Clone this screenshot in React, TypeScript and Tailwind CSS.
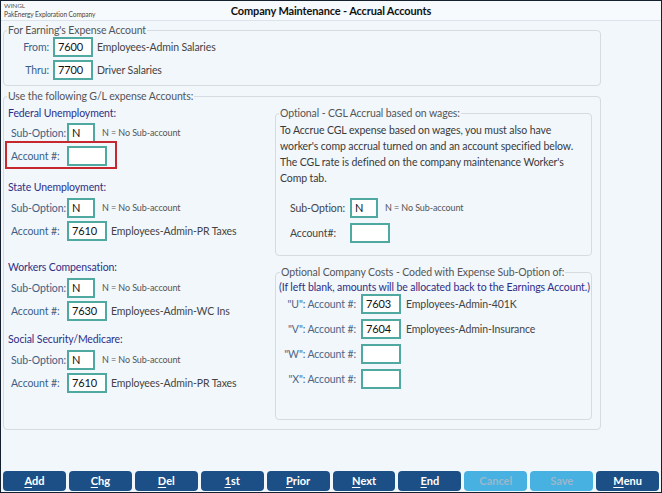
import React from "react";

const Box = ({ v = "", w = 40 }: { v?: string; w?: number }) => (
  <div
    className={`${w === 28 ? "w-[28px]" : "w-[40px]"} h-[20px] shrink-0 border-2 border-[#4fa9a1] bg-white pl-[3px] text-[11px] leading-[16px] text-[#111]`}
  >
    {v}
  </div>
);

const Row = ({
  label,
  v,
  w,
  desc,
  small,
}: {
  label: string;
  v?: string;
  w?: number;
  desc?: string;
  small?: boolean;
}) => (
  <div className="flex items-center h-[20px] whitespace-nowrap">
    <div className="w-[60px] pl-[4px] text-[#3d5f86]">{label}</div>
    <Box v={v} w={w} />
    {desc && (
      <div
        className={
          small
            ? "ml-[7px] text-[9px] text-[#555]"
            : "ml-[4px] text-[#444]"
        }
      >
        {desc}
      </div>
    )}
  </div>
);

const Heading = ({ children, cls }: { children: React.ReactNode; cls: string }) => (
  <div className={`${cls} ml-[1px] h-[14px] leading-[14px] text-[#2e2f85] whitespace-nowrap`}>{children}</div>
);

const Btn = ({ u, rest, off }: { u: string; rest: string; off?: boolean }) => (
  <div
    className={`flex-1 h-[20px] rounded-[4px] flex items-center justify-center font-bold text-[11px] tracking-normal ${
      off ? "bg-[#47b2e1] text-[#9bb7cb]" : "bg-[#1c4f86] text-white"
    }`}
  >
    <span className={off ? "" : "underline underline-offset-[2px]"}>{u}</span>
    <span>{rest}</span>
  </div>
);

export default function App() {
  return (
    <div className="w-[662px] h-[493px] border border-[#15202e] bg-[#f2f7fc] flex flex-col font-['Lato',sans-serif] text-[10.5px] tracking-[-0.1px] leading-[14px] overflow-hidden">
      {/* header */}
      <div className="relative h-[20px] border-b border-[#dce3ea] bg-[#f7fafd] shrink-0">
        <div className="pl-[3px] text-[6.5px] leading-[8px] text-[#555] pt-[1px]">WINGL</div>
        <div className="pl-[3px] text-[6.6px] leading-[9px] text-[#444]">PakEnergy Exploration Company</div>
        <div className="absolute inset-x-0 top-[3px] text-center font-bold text-[11px] tracking-[-0.15px] leading-[14px] text-[#111]">
          Company Maintenance - Accrual Accounts
        </div>
      </div>

      {/* fieldset 1 */}
      <fieldset className="ml-[2px] mt-[2px] w-[598px] min-w-0 border border-[#d5dbe1] rounded-[4px] pl-[3px] pb-[5px]">
        <legend className="px-[1px] text-[#555] leading-[14px]">For Earning's Expense Account</legend>
        <div className="flex items-center h-[20px]">
          <div className="w-[42px] text-right text-[#3d5f86]">From:</div>
          <div className="ml-[4px]"><Box v="7600" /></div>
          <div className="ml-[4px] text-[#444]">Employees-Admin Salaries</div>
        </div>
        <div className="flex items-center h-[20px] mt-[3px]">
          <div className="w-[42px] text-right text-[#3d5f86]">Thru:</div>
          <div className="ml-[4px]"><Box v="7700" /></div>
          <div className="ml-[4px] text-[#444]">Driver Salaries</div>
        </div>
      </fieldset>

      {/* fieldset 2 */}
      <fieldset className="ml-[2px] mt-[3px] w-[598px] min-w-0 border border-[#d5dbe1] rounded-[4px] pl-[3px] pr-[7px] pb-[9px]">
        <legend className="px-[1px] text-[#555] leading-[14px]">Use the following G/L expense Accounts:</legend>
        <div className="flex">
          {/* left column */}
          <div className="w-[268px] shrink-0">
            <Heading cls="mt-[3px]">Federal Unemployment:</Heading>
            <div className="mt-[3px]"><Row label="Sub-Option:" v="N" w={28} desc="N = No Sub-account" small /></div>
            <div className="mt-[3px] relative">
              <Row label="Account #:" />
              <div className="absolute left-[-2px] top-[-5px] w-[112px] h-[28px] border-2 border-[#c6282e]" />
            </div>

            <Heading cls="mt-[14px]">State Unemployment:</Heading>
            <div className="mt-[4px]"><Row label="Sub-Option:" v="N" w={28} desc="N = No Sub-account" small /></div>
            <div className="mt-[3px]"><Row label="Account #:" v="7610" desc="Employees-Admin-PR Taxes" /></div>

            <Heading cls="mt-[19px]">Workers Compensation:</Heading>
            <div className="mt-[4px]"><Row label="Sub-Option:" v="N" w={28} desc="N = No Sub-account" small /></div>
            <div className="mt-[3px]"><Row label="Account #:" v="7630" desc="Employees-Admin-WC Ins" /></div>

            <Heading cls="mt-[11px]">Social Security/Medicare:</Heading>
            <div className="mt-[4px]"><Row label="Sub-Option:" v="N" w={28} desc="N = No Sub-account" small /></div>
            <div className="mt-[3px]"><Row label="Account #:" v="7610" desc="Employees-Admin-PR Taxes" /></div>
          </div>

          {/* right column */}
          <div className="w-[317px] shrink-0">
            <fieldset className="mt-[3px] w-full min-w-0 border border-[#d5dbe1] rounded-[4px] pl-[3px] pb-[12px]">
              <legend className="px-[1px] text-[#555] leading-[14px] whitespace-nowrap">Optional - CGL Accrual based on wages:</legend>
              <div className="mt-[2px] ml-[1px] leading-[16px] text-[#3a3a3a] whitespace-nowrap">
                To Accrue CGL expense based on wages, you must also have
                <br />
                worker's comp accrual turned on and an account specified below.
                <br />
                The CGL rate is defined on the company maintenance Worker's
                <br />
                Comp tab.
              </div>
              <div className="flex items-center h-[20px] mt-[12px] whitespace-nowrap">
                <div className="w-[71px] pl-[11px] text-[#444]">Sub-Option:</div>
                <Box v="N" w={28} />
                <div className="ml-[7px] text-[9px] text-[#555]">N = No Sub-account</div>
              </div>
              <div className="flex items-center h-[20px] mt-[5px] whitespace-nowrap">
                <div className="w-[71px] pl-[11px] text-[#444]">Account#:</div>
                <Box />
              </div>
            </fieldset>

            <fieldset className="mt-[9px] w-full min-w-0 border border-[#d5dbe1] rounded-[4px] pl-[4px] pb-[30px]">
              <legend className="px-[1px] text-[#555] leading-[14px] whitespace-nowrap">Optional Company Costs - Coded with Expense Sub-Option of:</legend>
              <div className="mt-[1px] -ml-[1px] leading-[14px] text-[#2e2f85] whitespace-nowrap">
                (If left blank, amounts will be allocated back to the Earnings Account.)
              </div>
              {[
                ["\"U\": Account #:", "7603", "Employees-Admin-401K"],
                ["\"V\": Account #:", "7604", "Employees-Admin-Insurance"],
                ["\"W\": Account #:", "", ""],
                ["\"X\": Account #:", "", ""],
              ].map(([l, v, d], i) => (
                <div key={i} className={`flex items-center h-[20px] whitespace-nowrap ${i === 0 ? "mt-0" : "mt-[5px]"}`}>
                  <div className="w-[76px] text-right text-[#4d6686]">{l}</div>
                  <div className="ml-[5px]"><Box v={v} /></div>
                  {d && <div className="ml-[5px] text-[#444]">{d}</div>}
                </div>
              ))}
            </fieldset>
          </div>
        </div>
      </fieldset>

      {/* buttons */}
      <div className="mt-auto mb-[1px] flex gap-[3px] px-[2px]">
        <Btn u="A" rest="dd" />
        <Btn u="C" rest="hg" />
        <Btn u="D" rest="el" />
        <Btn u="1" rest="st" />
        <Btn u="P" rest="rior" />
        <Btn u="N" rest="ext" />
        <Btn u="E" rest="nd" />
        <Btn u="C" rest="ancel" off />
        <Btn u="S" rest="ave" off />
        <Btn u="M" rest="enu" />
      </div>
    </div>
  );
}
